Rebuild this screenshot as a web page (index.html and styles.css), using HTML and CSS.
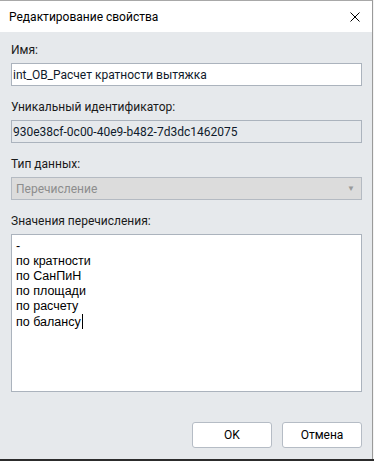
FILE: index.html
```html
<!DOCTYPE html>
<html lang="ru">

<head>
  <meta charset="UTF-8">
  <meta name="viewport" content="width=device-width, initial-scale=1.0">
  <title>Редактирование свойства</title>
  <link rel="stylesheet" href="styles.css">
</head>

<body>
  <div class="window">
    <header class="titlebar">
      <span class="title">Редактирование свойства</span>
      <button class="close" aria-label="Закрыть">
        <svg width="10" height="10" viewBox="0 0 10 10">
          <path d="M0.5 0.5 L9.5 9.5 M9.5 0.5 L0.5 9.5" stroke="#000" stroke-width="1" fill="none" />
        </svg>
      </button>
    </header>

    <main class="content">
      <div class="field">
        <label class="label" for="name">Имя:</label>
        <div class="input" id="name">int_OB_Расчет кратности вытяжка</div>
      </div>

      <div class="field">
        <span class="label">Уникальный идентификатор:</span>
        <div class="input readonly">930e38cf-0c00-40e9-b482-7d3dc1462075</div>
      </div>

      <div class="field">
        <span class="label">Тип данных:</span>
        <div class="select">
          <span>Перечисление</span>
          <span class="arrow">▼</span>
        </div>
      </div>

      <div class="field grow">
        <span class="label">Значения перечисления:</span>
        <div class="textarea">
          <div>-</div>
          <div>по кратности</div>
          <div>по СанПиН</div>
          <div>по площади</div>
          <div>по расчету</div>
          <div>по балансу<span class="caret"></span></div>
        </div>
      </div>

      <footer class="buttons">
        <button class="btn">OK</button>
        <button class="btn">Отмена</button>
      </footer>
    </main>
  </div>
  <div class="taskbar"></div>
</body>

</html>
```

FILE: styles.css
```css
*,
*::before,
*::after {
  box-sizing: border-box;
  margin: 0;
  padding: 0;
}

:root {
  /* COLORS */
  --panel: #e6e9ec;
  --border: #abb3bd;
  --text: #1a1a1a;
  --muted: #8d8d8d;

  /* FONTS */
  --ff-ui: Roboto, 'Noto Sans', sans-serif;
  --ff-edit: 'Liberation Sans', Arial, sans-serif;
}

body {
  width: 374px;
  height: 461px;
  overflow: hidden;
  background-color: #f4f4f4;
  font-family: var(--ff-ui);
  font-size: 12px;
  line-height: 16px;
  color: var(--text);
}

.window {
  display: flex;
  flex-direction: column;

  width: 373px;
  height: 459px;

  border-top: 1px solid #a8a8a8;
  border-right: 1px solid #9a9a9a;
  background-color: var(--panel);
}

.titlebar {
  display: flex;
  align-items: center;
  justify-content: space-between;

  height: 31px;
  padding-inline: 9px 9px;
  background-color: #fff;
}

.title {
  color: #000;
}

.close {
  display: grid;
  place-items: center;
  width: 16px;
  height: 16px;
  border: none;
  background: none;
}

.content {
  display: flex;
  flex-direction: column;
  flex: 1;

  padding: 10px 10px 11px 11px;
}

.field {
  display: flex;
  flex-direction: column;
  gap: 5px;
  margin-block-end: 13px;
}

.field.grow {
  margin-block-end: 0;
}

.input {
  height: 23px;
  padding: 2px 1px;
  line-height: 19px;

  border: 1px solid var(--border);
  background-color: #fff;
  color: #0f1a2b;
}

.input.readonly {
  background-color: var(--panel);
}

.select {
  display: flex;
  align-items: center;
  justify-content: space-between;

  height: 23px;
  padding: 0 6px 0 4px;

  border: 1px solid #b4bac2;
  background-color: #dcdcdc;
  color: var(--muted);
}

.arrow {
  font-size: 8px;
  color: #9a9a9a;
}

.textarea {
  height: 158px;
  padding: 4px 4px;
  font-family: var(--ff-edit);
  font-size: 12.5px;
  line-height: 15px;

  border: 1px solid var(--border);
  background-color: #fff;
  color: #000;
}

.caret {
  display: inline-block;
  width: 1px;
  height: 15px;
  margin-left: 1px;
  vertical-align: -3px;
  background-color: #000;
}

.buttons {
  display: flex;
  justify-content: flex-end;
  gap: 10px;
  margin-top: auto;
}

.btn {
  width: 80px;
  height: 26px;

  border: 1px solid #b5bcc5;
  border-radius: 3px;
  background-color: #fff;

  font-family: var(--ff-ui);
  font-size: 12px;
  color: #000;
}

.taskbar {
  height: 2px;
  background-color: #2c2c2c;
}
```
